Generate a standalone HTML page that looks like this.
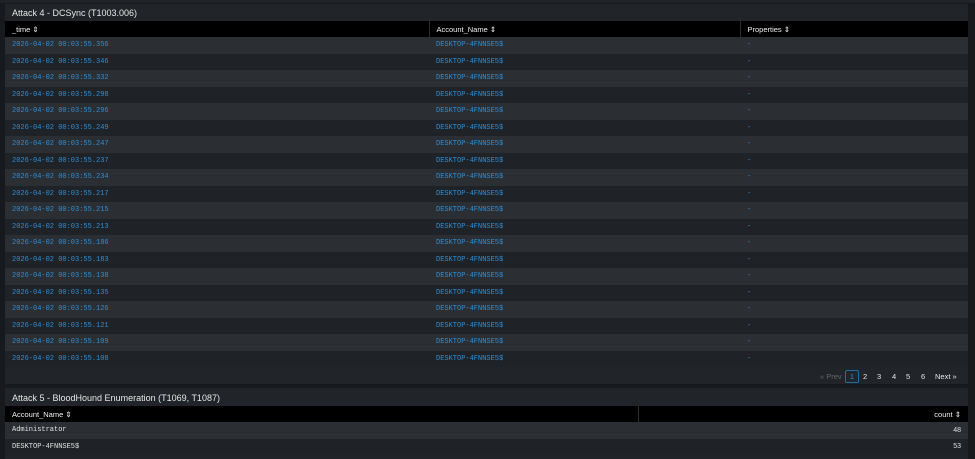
<!DOCTYPE html>
<html><head><style>
body{margin:0;background:#17191c;width:975px;height:459px;overflow:hidden;font-family:"Liberation Sans",sans-serif;}
.panel{position:absolute;left:5px;width:963px;background:#212428;}
.title{color:#e6e6e6;font-size:9px;height:17px;line-height:18px;padding-left:7px;}
table{border-collapse:collapse;width:100%;table-layout:fixed;}
th{background:#000;color:#f0f0f0;font-size:7.5px;font-weight:normal;text-align:left;height:16px;padding:0 7px;border-right:1px solid #2a2d31;}
th:last-child{border-right:none}
td{font-family:"Liberation Mono",monospace;font-size:7px;color:#2d8fd8;height:16.5px;padding:0 7px;}
tr.a td{background:#2b2e32}
tr.b td{background:#1f2226}
.w td{color:#e0e0e0}
.pag{height:17px;background:#212428;position:relative;font-size:7.5px;color:#e6e6e6}
.pag span{position:absolute;top:5px}
</style></head><body>
<div style="position:absolute;left:0;top:0;width:975px;height:3px;background:#1f2226"></div>
<div class="panel" style="top:4px">
<div class="title">Attack 4 - DCSync (T1003.006)</div>
<table>
<colgroup><col style="width:424px"><col style="width:311px"><col></colgroup>
<tr><th>_time ⇕</th><th>Account_Name ⇕</th><th>Properties ⇕</th></tr>
<tbody id="r"></tbody>
</table>
<div class="pag">
<span style="left:815px;color:#666">« Prev</span>
<span style="left:840px;top:3px;width:12px;height:11px;border:1px solid #1b6fa8;border-radius:2px;color:#2d8fd8;text-align:center;line-height:11px">1</span>
<span style="left:858px">2</span><span style="left:872px">3</span><span style="left:887px">4</span><span style="left:901px">5</span><span style="left:916px">6</span><span style="left:930px">Next »</span>
</div>
</div>
<div class="panel" style="top:388px;height:71px">
<div class="title" style="margin-top:1px">Attack 5 - BloodHound Enumeration (T1069, T1087)</div>
<table>
<colgroup><col style="width:633px"><col></colgroup>
<tr><th>Account_Name ⇕</th><th style="text-align:right">count ⇕</th></tr>
<tr class="a w"><td>Administrator</td><td style="text-align:right;font-family:'Liberation Sans'">48</td></tr>
<tr class="b w"><td>DESKTOP-4FNNSE5$</td><td style="text-align:right;font-family:'Liberation Sans'">53</td></tr>
</table>
</div>
<script>
var t=["356","346","332","298","296","249","247","237","234","217","215","213","186","183","138","135","126","121","109","108"],h="";
t.forEach(function(x,i){h+='<tr class="'+(i%2?'b':'a')+'"><td>2026-04-02 00:03:55.'+x+'</td><td>DESKTOP-4FNNSE5$</td><td>-</td></tr>';});
document.getElementById("r").innerHTML=h;
</script>
</body></html>
